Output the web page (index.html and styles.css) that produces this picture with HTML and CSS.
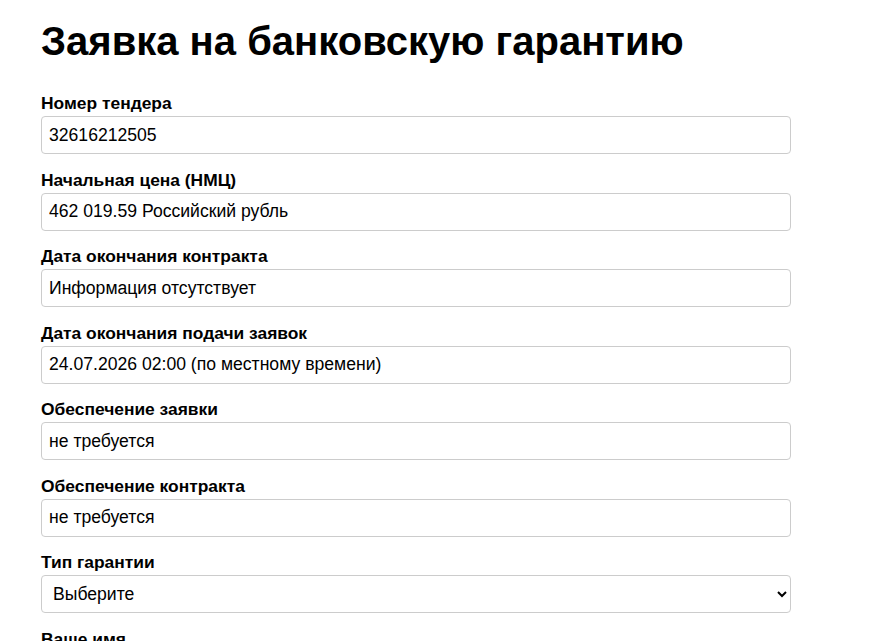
FILE: index.html
```html
<!DOCTYPE html>
<html lang="ru">
<head>
<meta charset="utf-8">
<title>Заявка на банковскую гарантию</title>
<link rel="stylesheet" href="styles.css">
</head>
<body>
<div class="page">
  <h1 class="title">Заявка на банковскую гарантию</h1>
  <form class="form">
    <div class="field">
      <label class="label">Номер тендера</label>
      <input class="control" type="text" value="32616212505">
    </div>
    <div class="field">
      <label class="label">Начальная цена (НМЦ)</label>
      <input class="control" type="text" value="462 019.59 Российский рубль">
    </div>
    <div class="field">
      <label class="label">Дата окончания контракта</label>
      <input class="control" type="text" value="Информация отсутствует">
    </div>
    <div class="field">
      <label class="label">Дата окончания подачи заявок</label>
      <input class="control" type="text" value="24.07.2026 02:00 (по местному времени)">
    </div>
    <div class="field">
      <label class="label">Обеспечение заявки</label>
      <input class="control" type="text" value="не требуется">
    </div>
    <div class="field">
      <label class="label">Обеспечение контракта</label>
      <input class="control" type="text" value="не требуется">
    </div>
    <div class="field">
      <label class="label">Тип гарантии</label>
      <select class="control select">
        <option>Выберите</option>
      </select>
    </div>
    <div class="field">
      <label class="label">Ваше имя</label>
      <input class="control" type="text" value="">
    </div>
  </form>
</div>
</body>
</html>
```

FILE: styles.css
```css
html, body {
  margin: 0;
  padding: 0;
  background: #fff;
}
body {
  font-family: "Liberation Sans", Arial, sans-serif;
  color: #000;
}
.page {
  padding: 0 41px;
}
.title {
  font-size: 40px;
  font-weight: bold;
  margin: 18px 0 29px;
  line-height: 46px;
}
.form {
  width: 750px;
  display: flex;
  flex-direction: column;
  gap: 15.5px;
}
.field {
  display: flex;
  flex-direction: column;
  gap: 3px;
}
.label {
  font-size: 17.4px;
  font-weight: bold;
  line-height: 20px;
}
.control {
  box-sizing: border-box;
  width: 100%;
  height: 38px;
  padding: 0 7px;
  font-family: "Liberation Sans", Arial, sans-serif;
  font-size: 17.6px;
  color: #000;
  border: 1px solid #ccc;
  border-radius: 4px;
  background: #fff;
}
.select {
  padding: 0 8px 0 7px;
}
```
